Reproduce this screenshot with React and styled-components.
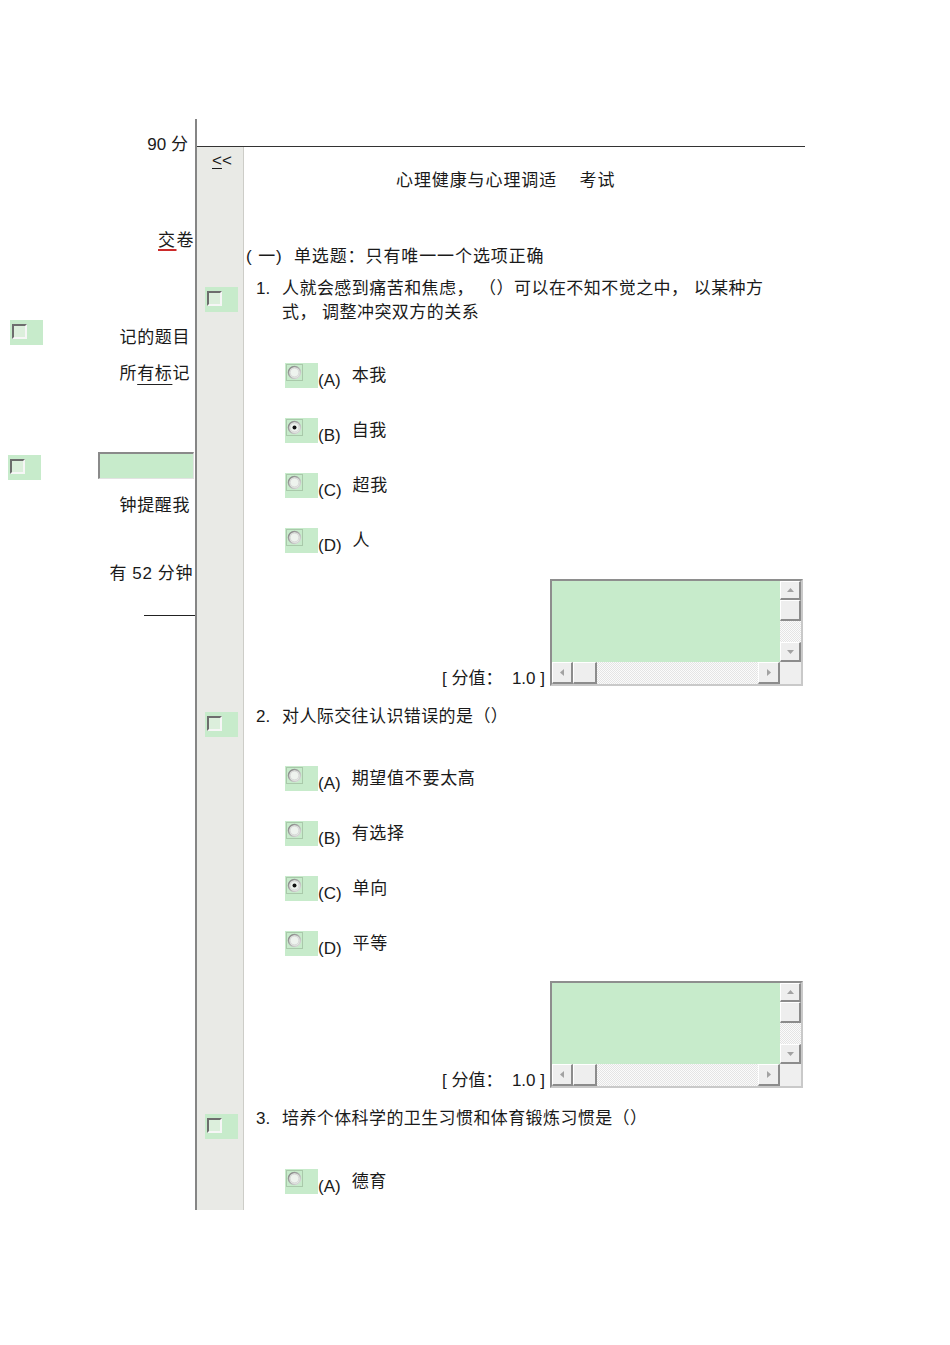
import React from "react";
import styled, { createGlobalStyle } from "styled-components";

const GREEN = "#c7ebcb";

const GlobalStyle = createGlobalStyle`
  html, body { margin: 0; padding: 0; background: #fff; }
  body {
    font-family: "Liberation Sans", "Noto Sans CJK SC", sans-serif;
    font-size: 17px;
    color: #1a1a1a;
  }
`;

const Page = styled.div`
  display: flex;
  padding-top: 119px;
  height: 1091px;
  width: 950px;
`;

/* ---------- left panel ---------- */
const LeftPanel = styled.div`
  width: 195px;
  flex-shrink: 0;
  border-right: 2px solid #858585;
  display: flex;
  flex-direction: column;
  align-items: flex-end;
`;

const SideText = styled.div`
  line-height: 20px;
  white-space: pre;
  letter-spacing: ${(p) => p.$ls ?? 0.6}px;
  margin-top: ${(p) => p.$top}px;
  margin-right: ${(p) => p.$right}px;
`;

const RedUnder = styled.span`
  text-decoration: underline;
  text-decoration-color: #cc2a2a;
  text-decoration-thickness: 1.5px;
  text-underline-offset: 3px;
`;

const BlackUnder = styled.span`
  text-decoration: underline;
  text-decoration-color: #222;
  text-underline-offset: 5px;
`;

const SideRow = styled.div`
  align-self: stretch;
  display: flex;
  justify-content: space-between;
  align-items: flex-start;
  margin-top: ${(p) => p.$top}px;
`;

const RowLabel = styled.div`
  line-height: 20px;
  letter-spacing: 0.6px;
  margin-top: 8px;
  margin-right: 5px;
`;

const TextBox = styled.div`
  width: 96px;
  height: 27px;
  box-sizing: border-box;
  background: ${GREEN};
  border-top: 2px solid #8a8a8a;
  border-left: 2px solid #8a8a8a;
  border-right: 1px solid #e2e2e2;
  border-bottom: 1px solid #e2e2e2;
  margin-right: 1px;
`;

const ShortRule = styled.div`
  width: 51px;
  border-top: 1px solid #222;
  margin-top: 31px;
`;

/* ---------- widgets ---------- */
const GreenBox = styled.span`
  display: inline-flex;
  align-items: flex-start;
  flex-shrink: 0;
  width: 33px;
  height: 25px;
  box-sizing: border-box;
  background: ${GREEN};
  padding: ${(p) => (p.$radio ? "1px 0 0 1px" : "4px 0 0 2px")};
  margin-top: ${(p) => p.$top || 0}px;
  margin-left: ${(p) => p.$left || 0}px;
`;

const CheckSquare = styled.span`
  width: 15px;
  height: 15px;
  box-sizing: border-box;
  border: 2px solid;
  border-color: #6d6d6d #f6f6f6 #f6f6f6 #6d6d6d;
  background: #dcefdc;
`;

function Checkbox({ top, left }) {
  return (
    <GreenBox $top={top} $left={left}>
      <CheckSquare />
    </GreenBox>
  );
}

function Radio({ checked }) {
  return (
    <GreenBox $radio>
      <svg width="17" height="17" viewBox="0 0 17 17">
        <defs>
          <linearGradient id="rg" x1="0" y1="0" x2="1" y2="1">
            <stop offset="0" stopColor="#7d7d7d" />
            <stop offset="1" stopColor="#e4e4e4" />
          </linearGradient>
        </defs>
        <rect x="0.5" y="0.5" width="16" height="16" fill="none" stroke="#a9c9aa" />
        <circle cx="8.5" cy="8.5" r="6" fill="#eef3ee" stroke="url(#rg)" strokeWidth="1.6" />
        <circle cx="8.5" cy="8.5" r="4.4" fill="none" stroke="#cfcfcf" strokeWidth="0.8" />
        {checked && <circle cx="8.5" cy="8.5" r="2" fill="#111" />}
      </svg>
    </GreenBox>
  );
}

/* ---------- right area ---------- */
const RightArea = styled.div`
  width: 608px;
  display: flex;
  flex-direction: column;
`;

const TopBar = styled.div`
  height: 27px;
  flex-shrink: 0;
  border-bottom: 1px solid #333;
`;

const Lower = styled.div`
  flex: 1;
  display: flex;
  flex-direction: column;
`;

const Row = styled.div`
  display: flex;
  flex: ${(p) => (p.$fill ? 1 : "none")};
`;

const Side = styled.div`
  width: 46px;
  flex-shrink: 0;
  background: #e9eae6;
  border-right: 1px solid #cdcdc8;
  display: flex;
  flex-direction: column;
  align-items: flex-start;
`;

const Main = styled.div`
  flex: 1;
  display: flex;
  flex-direction: column;
  padding-bottom: ${(p) => p.$bottom || 0}px;
`;

const BackLink = styled.div`
  margin: 4px 0 0 15px;
  line-height: 20px;
  span {
    text-decoration: underline;
    text-underline-offset: 2px;
  }
`;

const Title = styled.div`
  margin-top: 24px;
  padding-left: 152px;
  line-height: 20px;
  letter-spacing: 0.9px;
  white-space: pre;
`;

const Section = styled.div`
  margin-top: 56px;
  padding-left: 2px;
  line-height: 20px;
  letter-spacing: 0.9px;
  white-space: pre;
`;

const Question = styled.div`
  display: flex;
  padding-left: 12px;
  line-height: 24px;
`;

const QNum = styled.span`
  width: 26px;
  flex-shrink: 0;
`;

const QText = styled.div`
  white-space: pre;
  letter-spacing: ${(p) => p.$ls}px;
`;

const OptionList = styled.div`
  display: flex;
  flex-direction: column;
  gap: 30px;
  padding-left: 41px;
  margin-top: ${(p) => p.$top}px;
`;

const OptionRow = styled.div`
  display: flex;
  align-items: flex-start;
  height: 25px;
`;

const Letter = styled.span`
  margin-top: 9px;
  line-height: 17px;
`;

const OptText = styled.span`
  margin: 4px 0 0 11px;
  line-height: 17px;
  letter-spacing: 0.7px;
`;

const AnswerRow = styled.div`
  display: flex;
  justify-content: flex-end;
  align-items: flex-end;
  gap: 5px;
  padding-right: 2px;
  margin-top: ${(p) => p.$top}px;
`;

const Score = styled.span`
  line-height: 20px;
  margin-bottom: -3px;
  white-space: pre;
`;

/* textarea with scrollbars */
const Area = styled.div`
  width: 253px;
  height: 107px;
  box-sizing: border-box;
  border: 2px solid;
  border-color: #8e8e8e #c9c9c9 #c9c9c9 #8e8e8e;
  display: grid;
  grid-template-columns: 1fr 21px;
  grid-template-rows: 1fr 22px;
`;

const AreaBody = styled.div`
  background: ${GREEN};
`;

const VScroll = styled.div`
  display: flex;
  flex-direction: column;
`;

const HScroll = styled.div`
  display: flex;
`;

const Track = styled.div`
  flex: 1;
  background: repeating-conic-gradient(#e4e4e4 0 25%, #fbfbfb 0 50%) 0 0 / 2px 2px;
`;

const Corner = styled.div`
  background: #efefef;
`;

const SBtn = styled.div`
  box-sizing: border-box;
  flex-shrink: 0;
  width: ${(p) => p.$w}px;
  height: ${(p) => p.$h}px;
  background: #eeeeee;
  border-top: 1px solid #fff;
  border-left: 1px solid #fff;
  border-right: 2px solid #8c8c8c;
  border-bottom: 2px solid #8c8c8c;
  display: flex;
  align-items: center;
  justify-content: center;
`;

const Arrow = ({ dir }) => {
  const pts = {
    up: "0,4 3.5,0 7,4",
    down: "0,0 3.5,4 7,0",
    left: "4,0 0,3.5 4,7",
    right: "0,0 4,3.5 0,7",
  }[dir];
  const vertical = dir === "up" || dir === "down";
  return (
    <svg width={vertical ? 7 : 4} height={vertical ? 4 : 7}>
      <polygon points={pts} fill="#a2a2a2" />
    </svg>
  );
};

function ScrollArea() {
  return (
    <Area>
      <AreaBody />
      <VScroll>
        <SBtn $w={21} $h={19}>
          <Arrow dir="up" />
        </SBtn>
        <SBtn $w={21} $h={21} />
        <Track />
        <SBtn $w={21} $h={20}>
          <Arrow dir="down" />
        </SBtn>
      </VScroll>
      <HScroll>
        <SBtn $w={21} $h={22}>
          <Arrow dir="left" />
        </SBtn>
        <SBtn $w={24} $h={22} />
        <Track />
        <SBtn $w={22} $h={22}>
          <Arrow dir="right" />
        </SBtn>
      </HScroll>
      <Corner />
    </Area>
  );
}

const questions = [
  {
    num: "1.",
    lines: ["人就会感到痛苦和焦虑， （）可以在不知不觉之中， 以某种方", "式， 调整冲突双方的关系"],
    ls: 0.45,
    options: [
      ["(A)", "本我"],
      ["(B)", "自我"],
      ["(C)", "超我"],
      ["(D)", "人"],
    ],
    checked: 1,
    boxTop: 10,
    optTop: 38,
    ansTop: 26,
    bottom: 19,
    answer: true,
  },
  {
    num: "2.",
    lines: ["对人际交往认识错误的是（）"],
    ls: 0.4,
    options: [
      ["(A)", "期望值不要太高"],
      ["(B)", "有选择"],
      ["(C)", "单向"],
      ["(D)", "平等"],
    ],
    checked: 2,
    boxTop: 7,
    optTop: 37,
    ansTop: 25,
    bottom: 19,
    answer: true,
  },
  {
    num: "3.",
    lines: ["培养个体科学的卫生习惯和体育锻炼习惯是（）"],
    ls: 0.4,
    options: [["(A)", "德育"]],
    checked: -1,
    boxTop: 7,
    optTop: 38,
    answer: false,
  },
];

export default function App() {
  return (
    <>
      <GlobalStyle />
      <Page>
        <LeftPanel>
          <SideText $top={16} $right={7} $ls={0}>90 分</SideText>
          <SideText $top={76} $right={0} $ls={1.5}>
            <RedUnder>交</RedUnder>卷
          </SideText>
          <SideRow $top={69}>
            <Checkbox left={10} />
            <RowLabel>记的题目</RowLabel>
          </SideRow>
          <SideText $top={16} $right={5}>
            所<BlackUnder>有标</BlackUnder>记
          </SideText>
          <SideRow $top={68}>
            <Checkbox left={8} top={3} />
            <TextBox />
          </SideRow>
          <SideText $top={16} $right={5}>钟提醒我</SideText>
          <SideText $top={48} $right={2}>有 52 分钟</SideText>
          <ShortRule />
        </LeftPanel>

        <RightArea>
          <TopBar />
          <Lower>
            <Row>
              <Side>
                <BackLink>
                  <span>&lt;</span>&lt;
                </BackLink>
              </Side>
              <Main $bottom={10}>
                <Title>心理健康与心理调适    考试</Title>
                <Section>( 一)  单选题：只有唯一一个选项正确</Section>
              </Main>
            </Row>

            {questions.map((q) => (
              <Row key={q.num}>
                <Side>
                  <Checkbox left={8} top={q.boxTop} />
                </Side>
                <Main $bottom={q.bottom}>
                  <Question>
                    <QNum>{q.num}</QNum>
                    <QText $ls={q.ls}>
                      {q.lines.map((l) => (
                        <div key={l}>{l}</div>
                      ))}
                    </QText>
                  </Question>
                  <OptionList $top={q.optTop}>
                    {q.options.map(([letter, text], i) => (
                      <OptionRow key={letter}>
                        <Radio checked={i === q.checked} />
                        <Letter>{letter}</Letter>
                        <OptText>{text}</OptText>
                      </OptionRow>
                    ))}
                  </OptionList>
                  {q.answer && (
                    <AnswerRow $top={q.ansTop}>
                      <Score>[ 分值：  1.0 ]</Score>
                      <ScrollArea />
                    </AnswerRow>
                  )}
                </Main>
              </Row>
            ))}

            <Row $fill>
              <Side />
              <Main />
            </Row>
          </Lower>
        </RightArea>
      </Page>
    </>
  );
}
